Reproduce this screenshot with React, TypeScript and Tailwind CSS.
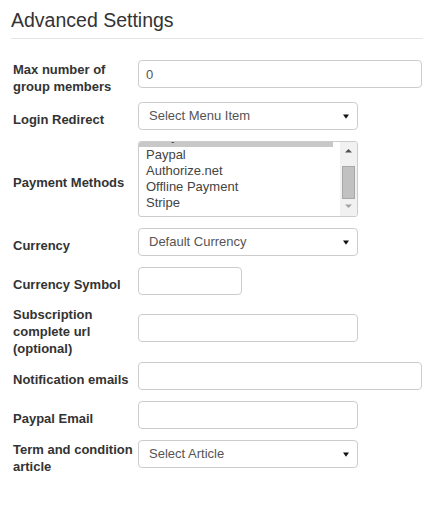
const FONT = "font-['Liberation_Sans',Arial,Helvetica,sans-serif]";

function Label({ children }: { children: React.ReactNode }) {
  return (
    <div className="w-[125px] shrink-0 text-[13px] leading-[17px] font-bold text-[#333]">{children}</div>
  );
}

function TextInput({ width, value = "" }: { width: string; value?: string }) {
  return (
    <input
      readOnly
      value={value}
      className={`${width} mb-[7px] h-[28px] rounded-[4px] border border-[#ccc] bg-white px-[7px] text-[13px] text-[#555] outline-none`}
    />
  );
}

function FakeSelect({ text }: { text: string }) {
  return (
    <div className="mb-[7px] flex h-[28px] w-[220px] items-center justify-between rounded-[4px] border border-[#ccc] bg-white pl-[10px] pr-[8px] text-[13px] text-[#555]">
      <span>{text}</span>
      <svg width="6" height="5" viewBox="0 0 6 5">
        <path d="M0 0.5 H6 L3 4.8 Z" fill="#111" />
      </svg>
    </div>
  );
}

const PAYMENTS = ["Eway", "Paypal", "Authorize.net", "Offline Payment", "Stripe"];

function ListBox() {
  return (
    <div className="mb-[7px] flex h-[76px] w-[220px] overflow-hidden rounded-[3px] border border-[#ccc] bg-white text-[13px] leading-[16px] text-[#444]">
      <div className="mt-[-11px] w-[194px] shrink-0">
        {PAYMENTS.map((p, i) => (
          <div key={p} className={`h-[16px] pl-[7px] ${i === 0 ? "bg-[#c8c8c8] leading-[9px]" : ""}`}>
            {p}
          </div>
        ))}
      </div>
      <div className="w-[7px] shrink-0" />
      <svg width="17" height="74" viewBox="0 0 17 74" className="shrink-0">
        <rect x="0" y="0" width="17" height="74" fill="#f1f1f1" />
        <path d="M5 10.5 H12 L8.5 7 Z" fill="#505050" />
        <rect x="2.5" y="24.5" width="12" height="32" fill="#c1c1c1" stroke="#a8a8a8" />
        <path d="M5 62.5 H12 L8.5 66 Z" fill="#a3a3a3" />
      </svg>
    </div>
  );
}

export default function App() {
  return (
    <div className={`${FONT} min-h-[516px] w-[448px] bg-white pt-[2px]`}>
      <div className="ml-[11px] w-[412px] border-b border-[#e5e5e5] text-[19.5px] leading-[36px] text-[#333]">
        Advanced Settings
      </div>

      <div className="mt-[21px] flex flex-col gap-1 pl-[13px]">
        <div className="flex items-center">
          <Label>Max number of group members</Label>
          <TextInput width="w-[284px]" value="0" />
        </div>
        <div className="mt-[3px] flex items-center">
          <Label>Login Redirect</Label>
          <FakeSelect text="Select Menu Item" />
        </div>
        <div className="flex items-center">
          <Label>Payment Methods</Label>
          <ListBox />
        </div>
        <div className="flex items-center">
          <Label>Currency</Label>
          <FakeSelect text="Default Currency" />
        </div>
        <div className="flex items-center">
          <Label>Currency Symbol</Label>
          <TextInput width="w-[104px]" />
        </div>
        <div className="flex items-center">
          <Label>Subscription complete url (optional)</Label>
          <TextInput width="w-[220px]" />
        </div>
        <div className="mt-px flex items-center">
          <Label>Notification emails</Label>
          <TextInput width="w-[284px]" />
        </div>
        <div className="flex items-center">
          <Label>Paypal Email</Label>
          <TextInput width="w-[220px]" />
        </div>
        <div className="flex items-center">
          <Label>Term and condition article</Label>
          <FakeSelect text="Select Article" />
        </div>
      </div>
    </div>
  );
}
